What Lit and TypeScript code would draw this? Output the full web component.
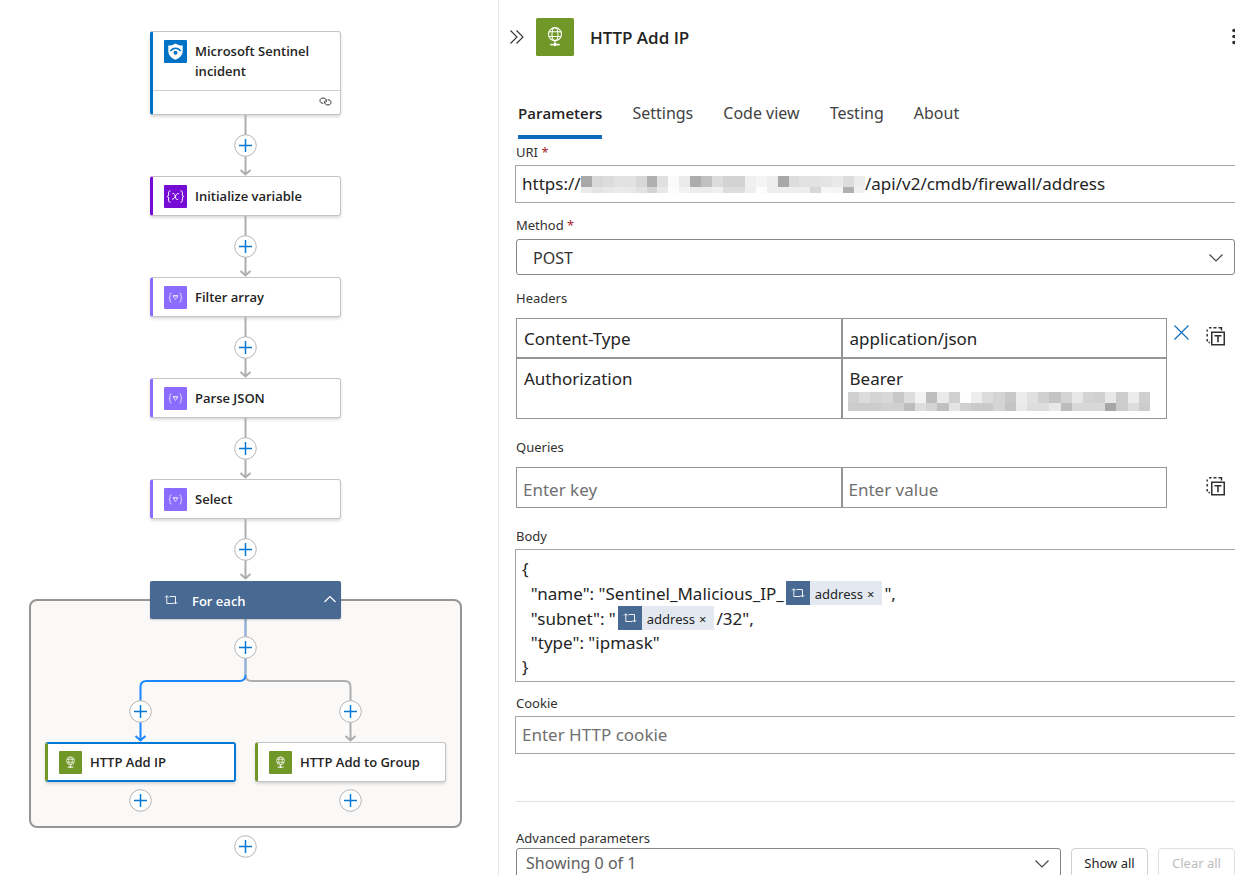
import { LitElement, html, svg, css, nothing } from "lit";
import { customElement, property } from "lit/decorators.js";

const loopIcon = html`<svg class="loop" viewBox="0 0 14 14" width="14" height="14" fill="none" stroke="currentColor" stroke-width="0.900" aria-hidden="true">
  <path d="M2.800 3v7.500H9.500M1 4.500l1.800-1.800 1.800 1.800" />
  <path d="M5.500 3.500h6v7.500M9.700 9.200l1.800 1.800 1.800-1.800" />
</svg>`;

const globe = (size: number) => html`<svg viewBox="0 0 24 24" width=${size} height=${size} aria-hidden="true">
  <rect width="24" height="24" rx="1" fill="#709727" />
  <g fill="none" stroke="#fff" stroke-width="0.700">
    <circle cx="12" cy="10.200" r="4.100" />
    <ellipse cx="12" cy="10.200" rx="1.900" ry="4.100" />
    <path d="M8.200 8.700h7.600M8.200 11.700h7.600M12 14v2.500" />
    <path d="M9 16.800h6" stroke-width="1" />
  </g>
  <circle cx="12" cy="16.700" r="1" fill="#fff" />
</svg>`;

const shield = html`<svg viewBox="0 0 23 23" width="23" height="23" aria-hidden="true">
  <rect width="23" height="23" rx="1" fill="#0072c6" />
  <path d="M11.500 3.500C9.800 4.800 7.400 5.500 4.300 5.600v5.200c0 4.300 2.900 7.200 7.200 8.900 4.300-1.700 7.200-4.600 7.200-8.900V5.600C15.600 5.500 13.200 4.800 11.500 3.500z" fill="#fff" />
  <path d="M6.300 11.200c2.600-4 7.800-4 10.400 0" fill="none" stroke="#0072c6" stroke-width="1.500" />
  <circle cx="11.500" cy="12.700" r="2" fill="#0072c6" />
</svg>`;

const braces = svg`<path d="M7.500 7c-1.300 0-1.500.5-1.500 1.500v1.700c0 .8-.4 1.200-1.100 1.300.7.1 1.100.5 1.100 1.300v1.700c0 1 .2 1.500 1.500 1.500M15.500 7c1.300 0 1.500.5 1.500 1.500v1.700c0 .8.4 1.200 1.100 1.300-.7.1-1.100.5-1.100 1.300v1.700c0 1-.2 1.500-1.500 1.500" />`;

const variableIcon = html`<svg viewBox="0 0 23 23" width="23" height="23" aria-hidden="true">
  <rect width="23" height="23" rx="1" fill="#770bd6" />
  <g fill="none" stroke="#fff" stroke-width="0.800" transform="translate(-2.900 -2.900) scale(1.250)">${braces}
    <path d="M9 9.300c1.200-.6 1.800.1 2.200 1.500l.5 1.900c.4 1.300 1 1.600 2 .9M14.200 9.300c-1-.5-1.800.2-2.700 1.800-.8 1.500-1.600 2.900-2.700 2.400" />
  </g>
</svg>`;

const dataIcon = html`<svg viewBox="0 0 23 23" width="23" height="23" aria-hidden="true">
  <rect width="23" height="23" rx="1" fill="#8c6cff" />
  <g fill="none" stroke="#fff" stroke-width="0.800" opacity="0.900">${braces}
    <path d="M9 9.800h5l-2.500 3.700zM9 9.800h5" />
  </g>
</svg>`;

const icons: Record<string, unknown> = { sentinel: shield, variable: variableIcon, data: dataIcon, http: globe(23) };

const plusShape = svg`<path d="M11.500 5v13M5 11.500h13" fill="none" stroke="#0078d4" stroke-width="1.500" />`;

const addButton = html`<button class="add" type="button" aria-label="Add an action">
  <svg viewBox="0 0 23 23" width="23" height="23" aria-hidden="true">
    <circle cx="11.500" cy="11.500" r="10.800" fill="#fff" stroke="#b4b4b4" />${plusShape}
  </svg>
</button>`;

const addStyles = css`
  .add {
    display: block;
    width: 23px;
    height: 23px;
    padding: 0;
    border: 0;
    background: none;
    cursor: pointer;
  }
  .add svg {
    display: block;
  }
`;

@customElement("flow-card")
class FlowCard extends LitElement {
  @property() label = "";
  @property() icon = "data";
  @property({ type: Boolean }) footer = false;

  static styles = css`
    :host {
      display: block;
      width: 191px;
      --accent: #8c6cff;
    }
    :host([icon="sentinel"]) { --accent: #0072c6; }
    :host([icon="variable"]) { --accent: #770bd6; }
    :host([icon="http"]) { --accent: #709727; }
    .card {
      box-sizing: border-box;
      width: 100%;
      min-height: 40px;
      border: 1px solid #c4c4c4;
      border-left: 3px solid var(--accent);
      border-radius: 3px;
      background: #fff;
      box-shadow: 0 2px 3px rgba(0, 0, 0, 0.14);
    }
    :host([selected]) .card {
      border: 2px solid #0078d4;
      border-left: 3px solid var(--accent);
    }
    .main {
      display: flex;
      gap: 8px;
      padding: 8px 8px 7px 11px;
    }
    :host([selected]) .main {
      padding: 7px 8px 6px 11px;
    }
    .main svg {
      flex: none;
      display: block;
    }
    .title {
      font: 600 13px/20px "Open Sans", "Noto Sans", sans-serif;
      color: #242424;
      padding-top: 1px;
    }
    .foot {
      display: flex;
      justify-content: flex-end;
      padding: 4px 8px 6px;
      border-top: 1px solid #d2d0ce;
    }
    .foot svg {
      display: block;
    }
    .footed .main {
      padding-bottom: 9px;
    }
  `;

  render() {
    return html`<div class="card ${this.footer ? "footed" : ""}">
      <div class="main">${icons[this.icon]}<span class="title">${this.label}</span></div>
      ${this.footer
        ? html`<div class="foot">
            <svg viewBox="0 0 13 13" width="13" height="13" fill="none" stroke="#323130" stroke-width="1" aria-hidden="true">
              <path d="M4.300 8.200C2.200 8.300 1 7.200 1 5.700 1 4.100 2.200 3 4 3s3.500 1.200 3.500 2.800c0 .8-.4 1.400-1 1.800M8.700 4.800c2.100-.1 3.300 1 3.300 2.500C12 8.900 10.800 10 9 10S5.500 8.800 5.500 7.200c0-.8.4-1.400 1-1.800" />
            </svg>
          </div>`
        : nothing}
    </div>`;
  }
}

@customElement("flow-edge")
class FlowEdge extends LitElement {
  static styles = [
    addStyles,
    css`
      :host {
        display: grid;
        place-items: center;
      }
      .line,
      .add {
        grid-area: 1 / 1;
      }
      .line {
        display: block;
      }
    `,
  ];

  render() {
    return html`<svg class="line" viewBox="0 0 13 61" width="13" height="61" fill="none" stroke="#aeaeb0" stroke-width="2" aria-hidden="true">
        <path d="M6.500 0v59M1.500 55l5 4.500 5-4.500" />
      </svg>
      ${addButton}`;
  }
}

@customElement("workflow-canvas")
class WorkflowCanvas extends LitElement {
  static styles = [
    addStyles,
    css`
      :host {
        display: flex;
        flex-direction: column;
        align-items: center;
        padding: 31px 7px 16px 0;
      }
      .scope-head {
        box-sizing: border-box;
        z-index: 1;
        display: flex;
        align-items: center;
        width: 191px;
        height: 38px;
        margin-top: 1px;
        padding: 0 4px 0 14px;
        border: 0;
        border-radius: 2px;
        background: #486991;
        color: #fff;
        font: 600 13px/20px "Open Sans", "Noto Sans", sans-serif;
        text-align: left;
        box-shadow: 0 1px 2px rgba(0, 0, 0, 0.2);
      }
      .scope-head .name {
        flex: 1;
        padding: 2px 0 0 14px;
      }
      .scope {
        box-sizing: border-box;
        width: 433px;
        margin-top: -20px;
        margin-bottom: 7px;
        padding: 18px 14px 14px;
        border: 2px solid #979593;
        border-radius: 8px;
        background: #faf9f8;
      }
      .fork {
        display: grid;
        grid-template-columns: 191px 191px;
        column-gap: 19px;
        grid-template-rows: 56px 12px 48px 7px;
        place-items: center;
      }
      .wires {
        grid-area: 1 / 1 / -1 / -1;
        display: block;
      }
      .root {
        grid-area: 1 / 1 / 2 / -1;
      }
      .left {
        grid-area: 3 / 1;
      }
      .right {
        grid-area: 3 / 2;
      }
      .branches {
        display: flex;
        gap: 19px;
      }
      .branch {
        display: flex;
        flex-direction: column;
        align-items: center;
        gap: 7px;
      }
    `,
  ];

  render() {
    return html`
      <flow-card icon="sentinel" label="Microsoft Sentinel incident" footer></flow-card>
      <flow-edge></flow-edge>
      <flow-card icon="variable" label="Initialize variable"></flow-card>
      <flow-edge></flow-edge>
      ${["Filter array", "Parse JSON", "Select"].map(
        (name) => html`<flow-card icon="data" label=${name}></flow-card><flow-edge></flow-edge>`
      )}
      <button class="scope-head" type="button" aria-expanded="true">
        ${loopIcon}<span class="name">For each</span>
        <svg viewBox="0 0 14 14" width="14" height="14" fill="none" stroke="#fff" stroke-width="1.200" aria-hidden="true">
          <path d="M1.500 9 7 3.500 12.500 9" />
        </svg>
      </button>
      <section class="scope" aria-label="For each">
        <div class="fork">
          <svg class="wires" viewBox="0 0 401 123" width="401" height="123" fill="none" stroke-width="2" aria-hidden="true">
            <path d="M200.500 0v56q0 6 6 6h93q6 0 6 6v53M300.500 117l5 4.500 5-4.500" stroke="#aeaeb0" />
            <path d="M200.500 56q0 6-6 6h-93q-6 0-6 6v53M90.500 117l5 4.500 5-4.500" stroke="#1a86ff" />
            <path d="M200.500 0v56" stroke="#8fb0dc" />
          </svg>
          <span class="root">${addButton}</span>
          <span class="left">${addButton}</span>
          <span class="right">${addButton}</span>
        </div>
        <div class="branches">
          <div class="branch"><flow-card icon="http" label="HTTP Add IP" selected></flow-card>${addButton}</div>
          <div class="branch"><flow-card icon="http" label="HTTP Add to Group"></flow-card>${addButton}</div>
        </div>
      </section>
      ${addButton}
    `;
  }
}

const uriMask = [
  "a8 d8 dc e2 e2 d8 b0 e0 fa ea ac c0 dc d3 d3 f0 f5 ee a8 dc e2 e2 e4 e9 dc ec",
  "ea e4 e8 ea e9 e2 d4 e8 fd f3 ec ec f0 dd dd ef fd ee ee ee ee d8 f6 f4 b0 f0",
];
const bearerMask = [
  "d0 dc d4 d8 c8 dd f3 bd ea d0 fe ee dc d4 c8 ec e0 d0 c4 d4 e8 d4 d0 e8 cc ec d0",
  "cc cc cc d0 d0 bd dd d4 c0 e4 d0 ca ca d4 c4 ea dd dd e8 bc d8 d8 d8 a6 cc dd cc",
];

const mosaic = (rows: string[], width: number, second: number) => {
  const cells = rows.map((r) => r.split(" "));
  const step = width / cells[0].length;
  return html`<svg class="mask" width=${width} height=${11 + second} viewBox="0 0 ${width} ${11 + second}" shape-rendering="crispEdges" role="img" aria-label="Hidden value">
    ${cells.map((row, y) =>
      row.map(
        (c, x) => svg`<rect x=${x * step} y=${y * 11} width=${step + 0.5} height=${y ? second : 11} fill=${"#" + c + c + c} />`
      )
    )}
  </svg>`;
};

const chevron = html`<svg class="chevron" viewBox="0 0 16 16" width="16" height="16" fill="none" stroke="#424242" stroke-width="1.100" aria-hidden="true">
  <path d="M1.500 5.500 8 12l6.500-6.500" />
</svg>`;

const textModeIcon = html`<svg viewBox="0 -2 20 23" width="20" height="23" fill="none" stroke="#323130" stroke-width="1.500" aria-hidden="true">
  <path d="M5.750 5.250h12.500v12.500H5.750z" />
  <path d="M8.500 8.700h7M12 8.700v6.500" stroke-width="1.600" />
  <path d="M1.200 4.500V2.500M1.200 7v2.500M1.200 12v2.500M2.500 15.500h1.500M3 .750h2.500M7.500 .750h3M12.500 .750H15.500V3.500" />
</svg>`;

@customElement("token-chip")
class TokenChip extends LitElement {
  @property() label = "";

  static styles = css`
    :host {
      display: inline-flex;
      height: 24px;
      margin: 0 2px;
      background: #e4e9f1;
      font: 13px/24px "Noto Sans", "Open Sans", sans-serif;
      color: #242424;
    }
    .icon {
      display: grid;
      place-items: center;
      width: 24px;
      background: #486991;
      color: #fff;
    }
    .label {
      padding: 1px 0 0 5px;
    }
    .remove {
      padding: 1px 8px 0 4px;
      border: 0;
      background: none;
      color: inherit;
      font: inherit;
    }
  `;

  render() {
    return html`<span class="icon">${loopIcon}</span><span class="label">${this.label}</span
      ><button class="remove" type="button" aria-label="Remove ${this.label}">×</button>`;
  }
}

@customElement("action-panel")
class ActionPanel extends LitElement {
  static styles = css`
    :host {
      display: block;
      min-width: 0;
      padding: 18px 0 0 17px;
      border-left: 1px solid #e6e6e6;
      font: 13px/20px "Noto Sans", "Open Sans", sans-serif;
      color: #323130;
      overflow: hidden;
    }
    svg {
      display: block;
      flex: none;
    }
    button,
    input,
    select {
      font: inherit;
      color: inherit;
    }
    .plain {
      padding: 0;
      border: 0;
      background: none;
      cursor: pointer;
    }
    .head {
      display: flex;
      align-items: center;
      margin-left: -8px;
    }
    .head .logo {
      margin: 0 16px 0 10px;
    }
    .head h1 {
      flex: 1;
      margin: 0;
      padding-top: 2px;
      font: 600 17px/24px "Open Sans", "Noto Sans", sans-serif;
      color: #242424;
    }
    .more {
      margin-right: -3px;
    }
    .tabs {
      display: flex;
      gap: 30px;
      margin-top: 45px;
      padding-left: 2px;
    }
    .tab {
      padding: 0 0 10px;
      border: 0;
      border-bottom: 4px solid transparent;
      background: none;
      font-size: 16px;
      line-height: 24px;
      color: #424242;
    }
    .tab.active {
      border-image: linear-gradient(#0f6cbd, #0f6cbd) 1;
      font-family: "Open Sans", "Noto Sans", sans-serif;
      font-size: 15px;
      font-weight: 600;
      color: #242424;
    }
    .label {
      display: block;
      width: fit-content;
      font-size: 13px;
      line-height: 20px;
    }
    .required {
      color: #a4262c;
    }
    .field {
      margin-top: 12px;
    }
    .group {
      margin-top: 13px;
    }
    .tabs + .field {
      margin-top: 3px;
    }
    .box {
      margin: 3px -8px 0 -1px;
      border: 1px solid #a6a6a6;
      font-size: 17px;
      color: #242424;
    }
    .bare {
      box-sizing: border-box;
      width: 100%;
      min-width: 0;
      padding: 0;
      border: 0;
      outline: 0;
      background: none;
    }
    .bare::placeholder {
      color: #707070;
      opacity: 1;
    }
    .line {
      display: flex;
      align-items: center;
      height: 36px;
      padding: 0 6px;
    }
    .scheme {
      flex: none;
      width: 59px;
    }
    .select {
      display: grid;
      align-items: center;
      margin-top: 4px;
    }
    .select select {
      grid-area: 1 / 1;
      appearance: none;
      box-sizing: border-box;
      width: 100%;
      height: 36px;
      padding: 2px 16px 0;
      border: 1px solid #868686;
      border-radius: 3px;
      background: #fff;
      font-size: 16px;
      color: #323130;
    }
    .select .chevron {
      grid-area: 1 / 1;
      justify-self: end;
      margin-right: 11px;
    }
    .pairs {
      display: flex;
      align-items: flex-start;
      margin: 10px 0 18px;
    }
    table {
      flex: 1;
      width: 100%;
      min-width: 0;
      table-layout: fixed;
      border-spacing: 0;
      font-size: 17px;
      line-height: 22px;
      color: #242424;
    }
    td {
      height: 38px;
      padding: 0 7px;
      border: 1px solid #959595;
      vertical-align: top;
    }
    td .bare {
      display: block;
      height: 22px;
      margin-top: 9px;
    }
    .queries td {
      height: 39px;
      padding: 0 6px;
    }
    .queries td .bare {
      margin-top: 11px;
    }
    .secret {
      margin: 2px 0 7px -2px;
      max-width: 100%;
      overflow: hidden;
    }
    .actions {
      display: flex;
      justify-content: space-between;
      align-items: flex-start;
      flex: 0 0 52px;
      padding: 7px 9px 0 7px;
    }
    .actions.single {
      justify-content: flex-end;
      padding-top: 8px;
    }
    .editor {
      padding: 7px 6px 2px;
      white-space: pre-wrap;
      line-height: 24px;
      outline: 0;
    }
    .row {
      display: flex;
    }
    .row.tokens {
      line-height: 25px;
    }
    .advanced {
      margin-top: 47px;
      padding-top: 26px;
      border-top: 1px solid #e0e0e0;
    }
    .editor-group + .field {
      margin-top: 11px;
    }
    .bar {
      display: flex;
      gap: 10px;
    }
    .bar .select {
      flex: 1;
      margin: 0;
    }
    .bar select {
      height: 30px;
      padding: 0 9px;
      color: #616161;
    }
    .button {
      box-sizing: border-box;
      width: 77px;
      height: 30px;
      padding: 0;
      border: 1px solid #d1d1d1;
      border-radius: 4px;
      background: #fff;
      color: #242424;
      font-size: 13px;
    }
    .button:disabled {
      border-color: #e0e0e0;
      color: #bdbdbd;
    }
  `;

  render() {
    return html`
      <header class="head">
        <button class="plain" type="button" aria-label="Collapse panel">
          <svg viewBox="0 0 18 18" width="18" height="18" fill="none" stroke="#323130" stroke-width="1.100" aria-hidden="true">
            <path d="M2.500 2.500 9 9l-6.500 6.500M8.500 2.500 15 9l-6.500 6.500" />
          </svg>
        </button>
        <span class="logo">${globe(38)}</span>
        <h1>HTTP Add IP</h1>
        <button class="plain more" type="button" aria-label="More">
          <svg viewBox="0 0 8 18" width="8" height="18" fill="#323130" aria-hidden="true">
            <circle cx="4" cy="2.500" r="1.800" /><circle cx="4" cy="8.500" r="1.800" /><circle cx="4" cy="14.500" r="1.800" />
          </svg>
        </button>
      </header>
      <div class="tabs" role="tablist">
        <button class="tab active" role="tab" aria-selected="true">Parameters</button>
        ${["Settings", "Code view", "Testing", "About"].map(
          (t) => html`<button class="tab" role="tab" aria-selected="false">${t}</button>`
        )}
      </div>

      <div class="field">
        <label class="label" for="uri">URI <span class="required">*</span></label>
        <div class="box line">
          <input class="bare scheme" id="uri" value="https://" />
          ${mosaic(uriMask, 284, 6)}
          <input class="bare" aria-label="URI path" value="/api/v2/cmdb/firewall/address" />
        </div>
      </div>

      <div class="field">
        <label class="label" for="method">Method <span class="required">*</span></label>
        <div class="select">
          <select id="method"><option>POST</option></select>
          ${chevron}
        </div>
      </div>

      <div class="group">
        <span class="label">Headers</span>
        <div class="pairs">
          <table aria-label="Headers">
            <tr>
              <td><input class="bare" aria-label="Header key" value="Content-Type" /></td>
              <td><input class="bare" aria-label="Header value" value="application/json" /></td>
            </tr>
            <tr>
              <td><input class="bare" aria-label="Header key" value="Authorization" /></td>
              <td><input class="bare" aria-label="Header value" value="Bearer" />
                <div class="secret">${mosaic(bearerMask, 302, 8)}</div></td>
            </tr>
          </table>
          <div class="actions">
            <button class="plain" type="button" aria-label="Delete header">
              <svg viewBox="0 0 15 15" width="15" height="15" fill="none" stroke="#0f6cbd" stroke-width="1.200" aria-hidden="true">
                <path d="M.5.5l14 14M14.500.5l-14 14" />
              </svg>
            </button>
            <button class="plain" type="button" aria-label="Switch headers to text mode">${textModeIcon}</button>
          </div>
        </div>
      </div>

      <div class="group queries">
        <span class="label">Queries</span>
        <div class="pairs">
          <table aria-label="Queries">
            <tr>
              <td><input class="bare" aria-label="Query key" placeholder="Enter key" /></td>
              <td><input class="bare" aria-label="Query value" placeholder="Enter value" /></td>
            </tr>
          </table>
          <div class="actions single">
            <button class="plain" type="button" aria-label="Switch queries to text mode">${textModeIcon}</button>
          </div>
        </div>
      </div>

      <div class="group editor-group">
        <span class="label" id="body-label">Body</span>
        <div class="box editor" role="textbox" aria-multiline="true" aria-labelledby="body-label" tabindex="0"
          ><div class="row">{</div
          ><div class="row tokens">${'  "name": "Sentinel_Malicious_IP_'}<token-chip label="address"></token-chip>",</div
          ><div class="row tokens">${'  "subnet": "'}<token-chip label="address"></token-chip>/32",</div
          ><div class="row">${'  "type": "ipmask"'}</div
          ><div class="row">}</div
        ></div>
      </div>

      <div class="field">
        <label class="label" for="cookie">Cookie</label>
        <div class="box line"><input class="bare" id="cookie" placeholder="Enter HTTP cookie" /></div>
      </div>

      <div class="advanced">
        <label class="label" for="advanced">Advanced parameters</label>
        <div class="bar">
          <div class="select">
            <select id="advanced"><option>Showing 0 of 1</option></select>
            ${chevron}
          </div>
          <button class="button" type="button">Show all</button>
          <button class="button" type="button" disabled>Clear all</button>
        </div>
      </div>
    `;
  }
}

@customElement("app-root")
class AppRoot extends LitElement {
  static styles = css`
    :host {
      display: grid;
      grid-template-columns: minmax(498px, 2fr) minmax(0, 3fr);
      height: 100vh;
      overflow: hidden;
      background: #fff;
    }
  `;

  render() {
    return html`<workflow-canvas></workflow-canvas><action-panel></action-panel>`;
  }
}
